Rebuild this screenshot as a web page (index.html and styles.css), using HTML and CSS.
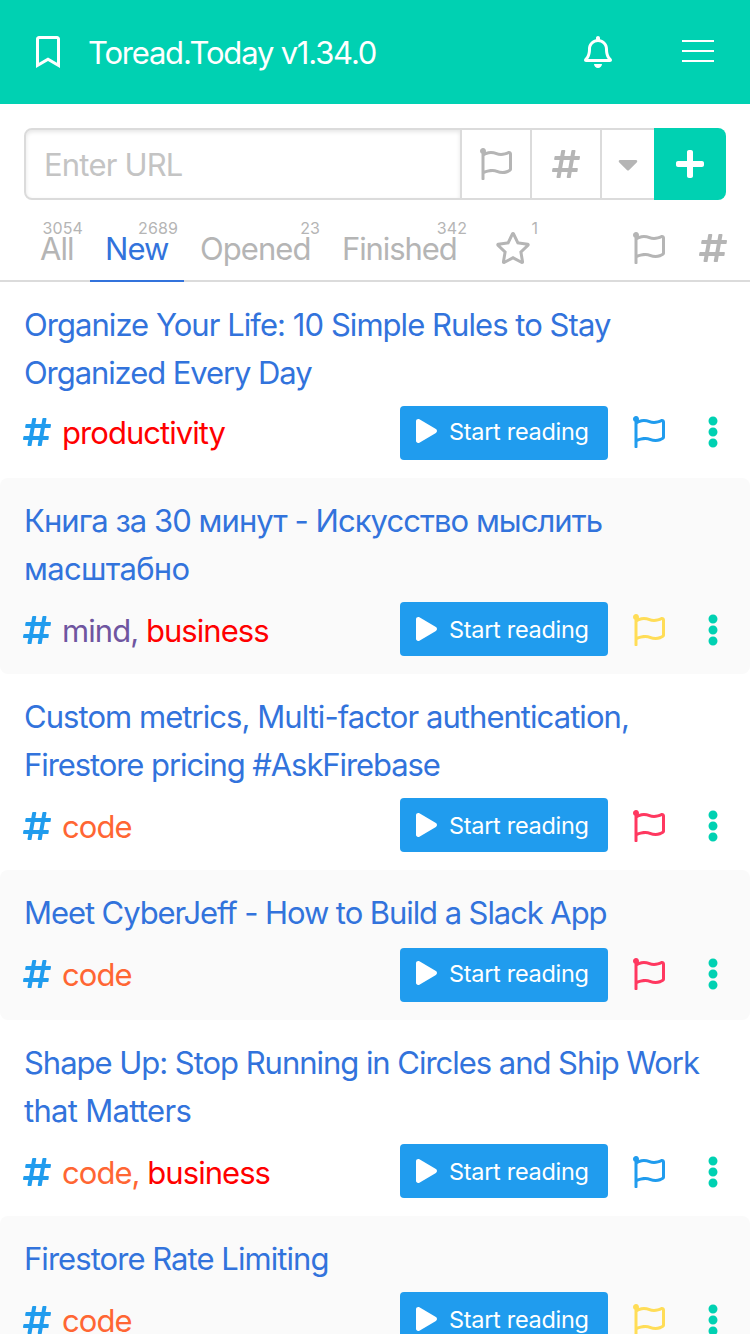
FILE: index.html
```html
<!DOCTYPE html>
<html lang="en">
<head>
<meta charset="utf-8">
<title>Toread.Today</title>
<link rel="stylesheet" href="styles.css">
</head>
<body>
<svg class="sprite" aria-hidden="true">
  <symbol id="hash" viewBox="0 0 448 512"><path d="M440.667 182.109l7.143-40c1.313-7.355-4.342-14.109-11.813-14.109h-74.81l14.623-81.891C377.123 38.754 371.468 32 363.997 32h-40.632a12 12 0 0 0-11.813 9.891L296.175 128H197.54l14.623-81.891C213.477 38.754 207.822 32 200.35 32h-40.632a12 12 0 0 0-11.813 9.891L132.528 128H53.432a12 12 0 0 0-11.813 9.891l-7.143 40C33.163 185.246 38.818 192 46.289 192h74.81L98.242 320H19.146a12 12 0 0 0-11.813 9.891l-7.143 40C-1.123 377.246 4.532 384 12.003 384h74.81L72.19 465.891C70.877 473.246 76.532 480 84.003 480h40.632a12 12 0 0 0 11.813-9.891L151.826 384h98.634l-14.623 81.891C234.523 473.246 240.178 480 247.65 480h40.632a12 12 0 0 0 11.813-9.891L315.472 384h79.096a12 12 0 0 0 11.813-9.891l7.143-40c1.313-7.355-4.342-14.109-11.813-14.109h-74.81l22.857-128h79.096a12 12 0 0 0 11.813-9.891zM261.889 320h-98.634l22.857-128h98.634l-22.857 128z"/></symbol>
  <symbol id="flag" viewBox="0 0 512 512"><path d="M336.174 80c-49.132 0-93.305-32-161.913-32-31.301 0-58.303 6.482-80.721 15.168a48.04 48.04 0 0 0 2.142-20.727C93.067 19.575 74.167 1.594 51.201.104 23.242-1.71 0 20.431 0 48c0 17.764 9.657 33.262 24 41.562V496c0 8.837 7.163 16 16 16h16c8.837 0 16-7.163 16-16v-83.443C109.869 395.28 143.259 384 199.826 384c49.132 0 93.305 32 161.913 32 58.479 0 101.972-22.617 128.548-39.981C503.846 367.161 512 352.051 512 335.855V95.937c0-34.459-35.264-57.768-66.904-44.117C409.193 67.309 371.641 80 336.174 80zM464 336c-21.783 15.412-60.824 32-102.261 32-59.945 0-102.002-32-161.913-32-43.361 0-96.379 9.403-127.826 24V128c21.784-15.412 60.824-32 102.261-32 59.945 0 102.002 32 161.913 32 43.271 0 96.32-17.366 127.826-32v240z"/></symbol>
  <symbol id="dots" viewBox="0 0 192 512"><path d="M96 184c39.8 0 72 32.2 72 72s-32.2 72-72 72-72-32.2-72-72 32.2-72 72-72zM24 80c0 39.8 32.2 72 72 72s72-32.2 72-72S135.8 8 96 8 24 40.2 24 80zm0 352c0 39.8 32.2 72 72 72s72-32.2 72-72-32.2-72-72-72-72 32.2-72 72z"/></symbol>
  <symbol id="play" viewBox="0 0 448 512"><path d="M424.4 214.7L72.4 6.6C43.8-10.3 0 6.1 0 47.9V464c0 37.5 40.7 60.1 72.4 41.3l352-208c31.4-18.5 31.5-64.1 0-82.6z"/></symbol>
</svg>

<header class="navbar">
  <svg class="icon-bookmark" viewBox="0 0 384 512"><path d="M336 0H48C21.49 0 0 21.49 0 48v464l192-112 192 112V48c0-26.51-21.49-48-48-48zm0 428.43l-144-84-144 84V54a6 6 0 0 1 6-6h276c3.314 0 6 2.683 6 5.996V428.43z"/></svg>
  <span class="brand">Toread.Today v1.34.0</span>
  <svg class="icon-bell" viewBox="0 0 448 512"><path d="M439.39 362.29c-19.32-20.76-55.47-51.99-55.47-154.29 0-77.7-54.48-139.9-127.94-155.16V32c0-17.67-14.32-32-31.98-32s-31.98 14.33-31.98 32v20.84C118.56 68.1 64.08 130.3 64.08 208c0 102.3-36.15 133.53-55.47 154.29-6 6.45-8.66 14.16-8.61 21.71.11 16.4 12.98 32 32.1 32h383.8c19.12 0 32-15.6 32.1-32 .05-7.55-2.61-15.27-8.61-21.71zM67.53 368c21.22-27.97 44.42-74.33 44.53-159.42 0-.2-.06-.38-.06-.58 0-61.86 50.14-112 112-112s112 50.14 112 112c0 .2-.06.38-.06.58.11 85.1 23.31 131.46 44.53 159.42H67.53zM224 512c35.32 0 63.97-28.65 63.97-64H160.03c0 35.35 28.65 64 63.97 64z"/></svg>
  <div class="burger"><span></span><span></span><span></span></div>
</header>

<form class="add-form">
  <div class="url-field"><span class="placeholder">Enter URL</span></div>
  <div class="addon"><svg class="icon-flag"><use href="#flag"/></svg></div>
  <div class="addon"><svg class="icon-hash"><use href="#hash"/></svg></div>
  <div class="addon addon-caret"><svg class="icon-caret" viewBox="0 0 320 512"><path d="M31.3 192h257.3c17.8 0 26.7 21.5 14.1 34.1L174.1 354.8c-7.8 7.8-20.5 7.8-28.3 0L17.2 226.1C4.6 213.5 13.5 192 31.3 192z"/></svg></div>
  <div class="add-button"><svg class="icon-plus" viewBox="0 0 448 512"><path d="M416 208H272V64c0-17.67-14.33-32-32-32h-32c-17.67 0-32 14.33-32 32v144H32c-17.67 0-32 14.33-32 32v32c0 17.67 14.33 32 32 32h144v144c0 17.67 14.33 32 32 32h32c17.67 0 32-14.33 32-32V304h144c17.67 0 32-14.33 32-32v-32c0-17.67-14.33-32-32-32z"/></svg></div>
</form>

<nav class="tabs">
  <div class="tab tab-all"><span class="tab-label">All</span><span class="count">3054</span></div>
  <div class="tab tab-new active"><span class="tab-label">New</span><span class="count">2689</span></div>
  <div class="tab tab-opened"><span class="tab-label">Opened</span><span class="count">23</span></div>
  <div class="tab tab-finished"><span class="tab-label">Finished</span><span class="count">342</span></div>
  <div class="tab tab-star"><svg class="icon-star" viewBox="0 0 576 512"><path d="M528.1 171.5L382 150.2 316.7 17.8c-11.7-23.6-45.6-23.9-57.4 0L194 150.2 47.9 171.5c-26.2 3.8-36.7 36.1-17.7 54.6l105.7 103-25 145.5c-4.5 26.3 23.2 46 46.4 33.7L288 439.6l130.7 68.7c23.2 12.2 50.9-7.4 46.4-33.7l-25-145.5 105.7-103c19-18.5 8.5-50.8-17.7-54.6zM388.6 312.3l23.7 138.4L288 385.4l-124.3 65.3 23.7-138.4-100.6-98 139-20.2 62.2-126 62.2 126 139 20.2-100.6 98z"/></svg><span class="count">1</span></div>
  <div class="filters"><svg class="icon-flag"><use href="#flag"/></svg><svg class="icon-hash"><use href="#hash"/></svg></div>
</nav>

<main class="list">
  <article class="item">
    <h2 class="title">Organize Your Life: 10 Simple Rules to Stay<br><span class="snug">Organized Every Day</span></h2>
    <div class="row"><svg class="icon-hash"><use href="#hash"/></svg><span class="tags"><span class="red">productivity</span></span><span class="start"><svg class="icon-play"><use href="#play"/></svg>Start reading</span><svg class="icon-flag blue"><use href="#flag"/></svg><svg class="icon-dots"><use href="#dots"/></svg></div>
  </article>
  <article class="item alt low">
    <h2 class="title">Книга за 30 минут - Искусство мыслить<br><span class="wide">масштабно</span></h2>
    <div class="row"><svg class="icon-hash"><use href="#hash"/></svg><span class="tags"><span class="purple">mind,</span> <span class="red">business</span></span><span class="start"><svg class="icon-play"><use href="#play"/></svg>Start reading</span><svg class="icon-flag yellow"><use href="#flag"/></svg><svg class="icon-dots"><use href="#dots"/></svg></div>
  </article>
  <article class="item low">
    <h2 class="title">Custom metrics, Multi-factor authentication,<br><span class="snug">Firestore pricing #AskFirebase</span></h2>
    <div class="row"><svg class="icon-hash"><use href="#hash"/></svg><span class="tags"><span class="orange">code</span></span><span class="start"><svg class="icon-play"><use href="#play"/></svg>Start reading</span><svg class="icon-flag pink"><use href="#flag"/></svg><svg class="icon-dots"><use href="#dots"/></svg></div>
  </article>
  <article class="item alt roomy">
    <h2 class="title"><span class="snug">Meet CyberJeff - How to Build a Slack App</span></h2>
    <div class="row"><svg class="icon-hash"><use href="#hash"/></svg><span class="tags"><span class="orange">code</span></span><span class="start"><svg class="icon-play"><use href="#play"/></svg>Start reading</span><svg class="icon-flag pink"><use href="#flag"/></svg><svg class="icon-dots"><use href="#dots"/></svg></div>
  </article>
  <article class="item low">
    <h2 class="title"><span class="close">Shape Up: Stop Running in Circles and Ship Work</span><br><span class="wide">that Matters</span></h2>
    <div class="row"><svg class="icon-hash"><use href="#hash"/></svg><span class="tags"><span class="orange">code,</span> <span class="red">business</span></span><span class="start"><svg class="icon-play"><use href="#play"/></svg>Start reading</span><svg class="icon-flag blue"><use href="#flag"/></svg><svg class="icon-dots"><use href="#dots"/></svg></div>
  </article>
  <article class="item alt low">
    <h2 class="title">Firestore Rate Limiting</h2>
    <div class="row"><svg class="icon-hash"><use href="#hash"/></svg><span class="tags"><span class="orange">code</span></span><span class="start"><svg class="icon-play"><use href="#play"/></svg>Start reading</span><svg class="icon-flag yellow"><use href="#flag"/></svg><svg class="icon-dots"><use href="#dots"/></svg></div>
  </article>
</main>
</body>
</html>
```
FILE: styles.css
```css
* { box-sizing: border-box; }
html, body { margin: 0; height: 1334px; overflow: hidden; }
body {
  width: 750px;
  background: #fff;
  font: 400 31px/48px Inter, "Noto Sans", sans-serif;
  letter-spacing: -0.95px;
}
svg { display: block; flex: none; fill: currentColor; }
.sprite { position: absolute; width: 0; height: 0; }
.icon-hash { width: 28px; height: 32px; }
.icon-flag { width: 32px; height: 32px; }

.navbar { display: flex; align-items: center; height: 104px; padding: 0 36px; background: #00d1b2; color: #fff; }
.icon-bookmark { width: 24px; height: 32px; }
.brand { margin-left: 28px; width: 496px; white-space: nowrap; padding-top: 2px; letter-spacing: -1.2px; }
.icon-bell { width: 28px; height: 32px; }
.burger { display: flex; flex-direction: column; gap: 8px; margin-left: 70px; padding-bottom: 2px; }
.burger span { width: 32px; height: 2px; background: #fff; }

.add-form { display: flex; height: 72px; margin: 24px 24px 0; color: #b5b5b5; }
.url-field { width: 438px; border: 2px solid #dbdbdb; border-radius: 8px 0 0 8px; box-shadow: inset 0 2px 4px rgba(10,10,10,.1); padding: 11px 18px; color: #c4c4c4; letter-spacing: -.8px; }
.addon { display: flex; align-items: center; justify-content: center; width: 70px; border: 2px solid #dbdbdb; border-left: 0; }
.addon-caret { width: 52px; border-right: 0; }
.icon-caret { width: 20px; height: 32px; }
.add-button { display: flex; align-items: center; justify-content: center; width: 72px; background: #00d1b2; color: #fff; border-radius: 0 8px 8px 0; }
.icon-plus { width: 28px; height: 32px; }

.tabs { display: flex; height: 82px; border-bottom: 2px solid #dbdbdb; padding-left: 24px; color: #b5b5b5; }
.tab { position: relative; height: 82px; padding: 25px 0 0 16px; }
.tab-all { width: 66px; }
.tab-new { width: 94px; padding-left: 15px; }
.tab-opened { width: 143px; }
.tab-finished { width: 152px; padding-left: 15px; letter-spacing: -1.1px; }
.tab-star { width: 66px; padding-top: 32px; }
.icon-star { width: 36px; height: 32px; }
.active { border-bottom: 2px solid #3273dc; }
.active .tab-label { color: #3273dc; }
.count { position: absolute; top: 20px; right: 7px; font-size: 16px; line-height: 16px; letter-spacing: .1px; }
.tab-new .count { right: 6px; }
.tab-finished .count { right: 12px; }
.tab-star .count { right: 7px; }
.filters { display: flex; gap: 34px; margin: 32px 0 0 auto; padding-right: 23px; }

.item { padding: 19px 24px 18px; }
.alt { background: #fafafa; border-radius: 8px; }
.title { margin: 0; font: inherit; color: #3273dc; white-space: nowrap; }
.snug { letter-spacing: -1.08px; }
.close { letter-spacing: -1.03px; }
.wide { letter-spacing: -.7px; }
.row { display: flex; align-items: center; height: 54px; margin-top: 9px; padding-right: 7px; }
.row .icon-hash { margin: -2px 0 0 -1px; color: #209cee; }
.row .icon-flag { margin: -2px 42px 0 25px; }
.icon-dots { width: 12px; height: 32px; margin-top: -2px; color: #00d1b2; }
.tags { width: 338px; margin-left: 11px; white-space: nowrap; }
.start { display: flex; align-items: center; width: 208px; height: 54px; padding: 0 0 3px 16px; border-radius: 4px; background: #209cee; color: #fff; font-size: 23.5px; letter-spacing: -.3px; white-space: nowrap; }
.icon-play { width: 21px; height: 24px; margin: -1px 12px 0 0; }
.low .row .icon-hash, .low .row .icon-flag, .low .icon-dots { margin-top: 2px; }
.low .start { padding: 1px 0 0 16px; }
.low .tags { padding-top: 4px; }
.roomy .row { margin-top: 11px; }
.red { color: #f00; }
.purple { color: #6f55a0; }
.orange { color: #ff6633; }
.blue { color: #209cee; }
.yellow { color: #ffdd57; }
.pink { color: #ff3860; }
```
